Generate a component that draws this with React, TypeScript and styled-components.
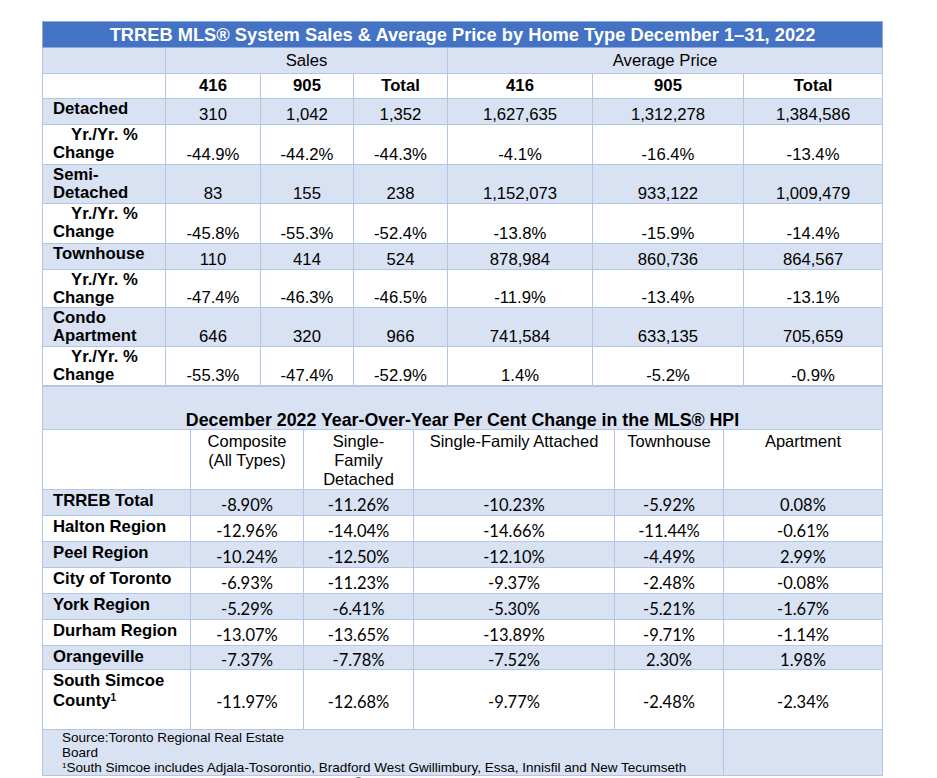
import React from 'react';
import styled, { createGlobalStyle, css } from 'styled-components';

const GlobalStyle = createGlobalStyle`
  html, body {
    margin: 0;
    padding: 0;
    background: #ffffff;
    overflow: hidden;
  }
`;

const LINE = '#b4c6e7';
const SHADE = '#d9e2f3';
const BLUE = '#4472c4';
const ARIAL = `"Liberation Sans", Arial, sans-serif`;
const CALIBRI = `Lato, "Open Sans", sans-serif`;

const Page = styled.div`
  padding: 21px 0 0 42px;
  font-family: ${ARIAL};
  color: #000;
`;

const Table = styled.table`
  border-collapse: collapse;
  table-layout: fixed;
  width: 840px;

  td, th {
    border: 1px solid ${LINE};
    padding: 0;
    overflow: hidden;
  }
`;

const Row = styled.tr<{ $shade?: boolean; $h: number }>`
  background: ${(p) => (p.$shade ? SHADE : '#ffffff')};
  height: ${(p) => p.$h}px;
`;

const TitleCell = styled.th`
  background: ${BLUE};
  color: #ffffff;
  font-size: 18.3px;
  font-weight: 700;
  line-height: 20px;
  text-align: center;
  vertical-align: middle;
  && {
    border-color: #8eaadb;
  }
`;

const GroupHead = styled.th`
  font-size: 16.7px;
  font-weight: 400;
  line-height: 18px;
  text-align: center;
  vertical-align: middle;
`;

const CodeHead = styled.th`
  font-size: 16.7px;
  font-weight: 700;
  line-height: 18px;
  text-align: center;
  vertical-align: middle;
`;

const Label = styled.td<{ $indent?: boolean; $lh?: number }>`
  font-size: 16.7px;
  font-weight: 700;
  line-height: ${(p) => p.$lh ?? 18}px;
  vertical-align: top;
  text-align: left;
  && {
    padding: 1px 4px 0 10px;
  }
  ${(p) =>
    p.$indent &&
    css`
      text-indent: 18px;
    `}
`;

const Num = styled.td`
  font-size: 16.7px;
  line-height: 18px;
  text-align: center;
  vertical-align: bottom;
  && {
    padding-bottom: 0;
  }
`;

const Pct = styled.td`
  font-family: ${CALIBRI};
  font-size: 16.5px;
  line-height: 18px;
  text-align: center;
  vertical-align: middle;
  && {
    padding-top: 4px;
  }
`;

const SectionTitle = styled.td`
  background: ${SHADE};
  font-size: 17.8px;
  font-weight: 700;
  line-height: 18px;
  text-align: center;
  vertical-align: bottom;
`;

const ColHead = styled.td`
  font-size: 16.5px;
  line-height: 19px;
  text-align: center;
  vertical-align: top;
  && {
    padding: 2px 6px 0;
  }
`;

const Note = styled.td`
  background: ${SHADE};
  font-size: 13.5px;
  line-height: 15px;
  vertical-align: top;
  && {
    padding: 0 0 0 19px;
  }
`;

const Source = styled.div`
  width: 225px;
`;

const Sup = styled.sup`
  font-size: 0.6em;
  line-height: 0;
  vertical-align: 0.55em;
`;

const CutLine = styled.div`
  margin-top: -1px;
  font-size: 13.5px;
  line-height: 15px;
  white-space: nowrap;
`;

const Link = styled.a`
  color: #0563c1;
  text-decoration: underline;
`;

const salesCols = [123, 95, 93, 94, 145, 151, 139];
const hpiCols = [148, 113, 110, 201, 109, 159];

type SalesRow = { label: string; values: string[]; h: number; change?: boolean };

const salesRows: SalesRow[] = [
  { label: 'Detached', values: ['310', '1,042', '1,352', '1,627,635', '1,312,278', '1,384,586'], h: 26 },
  { label: 'Yr./Yr. % Change', change: true, values: ['-44.9%', '-44.2%', '-44.3%', '-4.1%', '-16.4%', '-13.4%'], h: 40 },
  { label: 'Semi-Detached', values: ['83', '155', '238', '1,152,073', '933,122', '1,009,479'], h: 39 },
  { label: 'Yr./Yr. % Change', change: true, values: ['-45.8%', '-55.3%', '-52.4%', '-13.8%', '-15.9%', '-14.4%'], h: 40 },
  { label: 'Townhouse', values: ['110', '414', '524', '878,984', '860,736', '864,567'], h: 26 },
  { label: 'Yr./Yr. % Change', change: true, values: ['-47.4%', '-46.3%', '-46.5%', '-11.9%', '-13.4%', '-13.1%'], h: 38 },
  { label: 'Condo Apartment', values: ['646', '320', '966', '741,584', '633,135', '705,659'], h: 39 },
  { label: 'Yr./Yr. % Change', change: true, values: ['-55.3%', '-47.4%', '-52.9%', '1.4%', '-5.2%', '-0.9%'], h: 39 },
];

type HpiRow = { label: React.ReactNode; values: string[]; h: number };

const hpiRows: HpiRow[] = [
  { label: 'TRREB Total', values: ['-8.90%', '-11.26%', '-10.23%', '-5.92%', '0.08%'], h: 26 },
  { label: 'Halton Region', values: ['-12.96%', '-14.04%', '-14.66%', '-11.44%', '-0.61%'], h: 26 },
  { label: 'Peel Region', values: ['-10.24%', '-12.50%', '-12.10%', '-4.49%', '2.99%'], h: 26 },
  { label: 'City of Toronto', values: ['-6.93%', '-11.23%', '-9.37%', '-2.48%', '-0.08%'], h: 26 },
  { label: 'York Region', values: ['-5.29%', '-6.41%', '-5.30%', '-5.21%', '-1.67%'], h: 26 },
  { label: 'Durham Region', values: ['-13.07%', '-13.65%', '-13.89%', '-9.71%', '-1.14%'], h: 26 },
  { label: 'Orangeville', values: ['-7.37%', '-7.78%', '-7.52%', '2.30%', '1.98%'], h: 24 },
  {
    label: (
      <>
        South Simcoe County<Sup>1</Sup>
      </>
    ),
    values: ['-11.97%', '-12.68%', '-9.77%', '-2.48%', '-2.34%'],
    h: 60,
  },
];

const hpiHeads = ['Composite (All Types)', 'Single-Family Detached', 'Single-Family Attached', 'Townhouse', 'Apartment'];

const App = () => (
  <>
    <GlobalStyle />
    <Page>
      <Table>
        <colgroup>
          {salesCols.map((w, i) => (
            <col key={i} style={{ width: w }} />
          ))}
        </colgroup>
        <tbody>
          <Row $h={26}>
            <TitleCell colSpan={7}>
              TRREB MLS® System Sales &amp; Average Price by Home Type December 1–31, 2022
            </TitleCell>
          </Row>
          <Row $shade $h={26}>
            <GroupHead />
            <GroupHead colSpan={3}>Sales</GroupHead>
            <GroupHead colSpan={3}>Average Price</GroupHead>
          </Row>
          <Row $h={25}>
            <CodeHead />
            {['416', '905', 'Total', '416', '905', 'Total'].map((c, i) => (
              <CodeHead key={i}>{c}</CodeHead>
            ))}
          </Row>
          {salesRows.map((r, i) => (
            <Row key={i} $shade={i % 2 === 0} $h={r.h}>
              <Label $indent={r.change}>{r.label}</Label>
              {r.values.map((v, j) => (
                <Num key={j}>{v}</Num>
              ))}
            </Row>
          ))}
        </tbody>
      </Table>
      <Table>
        <colgroup>
          {hpiCols.map((w, i) => (
            <col key={i} style={{ width: w }} />
          ))}
        </colgroup>
        <tbody>
          <Row $shade $h={43}>
            <SectionTitle colSpan={6}>
              December 2022 Year-Over-Year Per Cent Change in the MLS® HPI
            </SectionTitle>
          </Row>
          <Row $h={59}>
            <ColHead />
            {hpiHeads.map((h) => (
              <ColHead key={h}>{h}</ColHead>
            ))}
          </Row>
          {hpiRows.map((r, i) => (
            <Row key={i} $shade={i % 2 === 0} $h={r.h}>
              <Label $lh={20}>{r.label}</Label>
              {r.values.map((v, j) => (
                <Pct key={j}>{v}</Pct>
              ))}
            </Row>
          ))}
          <Row $h={46}>
            <Note colSpan={5}>
              <Source>Source:Toronto Regional Real Estate Board</Source>
              <div>
                <Sup>1</Sup>South Simcoe includes Adjala-Tosorontio, Bradford West Gwillimbury, Essa, Innisfil and New
                Tecumseth
              </div>
            </Note>
            <Note />
          </Row>
        </tbody>
      </Table>
      <CutLine>
        Please note the methodology used to calculate MLS® HPI has been enhanced. For more information click{' '}
        <Link href="#">HERE</Link>
      </CutLine>
    </Page>
  </>
);

export default App;
